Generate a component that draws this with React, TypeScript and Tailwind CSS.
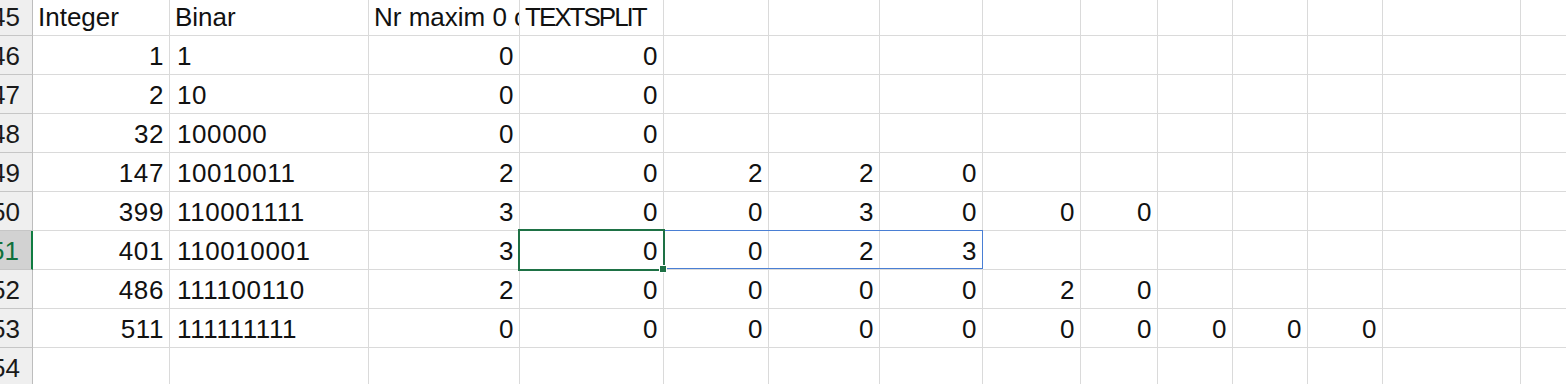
import React from "react";

const colW = [
  "w-[137px]",
  "w-[199px]",
  "w-[151px]",
  "w-[144px]",
  "w-[105px]",
  "w-[111px]",
  "w-[103px]",
  "w-[98px]",
  "w-[77px]",
  "w-[75px]",
  "w-[75px]",
  "w-[75px]",
  "w-[138px]",
  "w-[200px]",
];

type Cell = string | number | null;

const rows: { n: number; cells: Cell[] }[] = [
  { n: 46, cells: [1, "1", 0, 0] },
  { n: 47, cells: [2, "10", 0, 0] },
  { n: 48, cells: [32, "100000", 0, 0] },
  { n: 49, cells: [147, "10010011", 2, 0, 2, 2, 0] },
  { n: 50, cells: [399, "110001111", 3, 0, 0, 3, 0, 0, 0] },
  { n: 51, cells: [401, "110010001", 3, 0, 0, 2, 3] },
  { n: 52, cells: [486, "111100110", 2, 0, 0, 0, 0, 2, 0] },
  { n: 53, cells: [511, "111111111", 0, 0, 0, 0, 0, 0, 0, 0, 0, 0] },
  { n: 54, cells: [] },
];

function RowHeader({ n, selected, first }: { n: number; selected?: boolean; first?: boolean }) {
  return (
    <div
      className={
        "w-[33px] shrink-0 overflow-hidden flex justify-end items-end pb-[3px] pr-[12px] leading-[30px] border-b border-b-[#c6c6c6] " +
        (first ? "h-[36px] " : "h-[39px] ") +
        (selected
          ? "bg-[#d2d2d2] text-[#0f703b] border-r-2 border-r-[#107c41]"
          : "bg-[#efefef] text-[#1a1a1a] border-r border-r-[#bdbdbd]")
      }
    >
      <span className="whitespace-nowrap">{n}</span>
    </div>
  );
}

export default function App() {
  return (
    <div className="w-[1566px] h-[384px] overflow-hidden bg-white text-[#111] text-[26px] font-['Liberation_Sans',Arial,sans-serif]">
      {/* header row 45 */}
      <div className="flex h-[36px]">
        <RowHeader n={45} first />
        {colW.map((w, i) => {
          const text = i === 0 ? "Integer" : i === 1 ? "Binar" : i === 2 ? "Nr maxim 0 consecutive" : i === 3 ? "TEXTSPLIT" : "";
          return (
            <div
              key={i}
              className={
                w +
                " shrink-0 h-[36px] overflow-hidden whitespace-nowrap flex items-end pb-[3px] pl-[5px] leading-[30px] border-r border-b border-[#dadada]"
              }
            >
              <span className={i === 3 ? "tracking-[-2px]" : ""}>{text}</span>
            </div>
          );
        })}
      </div>

      {rows.map((r) => (
        <div key={r.n} className="flex h-[39px]">
          <RowHeader n={r.n} selected={r.n === 51} />
          {colW.map((w, i) => {
            const v = r.cells[i];
            const left = i === 1;
            const isActive = r.n === 51 && i === 3;
            const isRangeStart = r.n === 51 && i === 4;
            return (
              <div
                key={i}
                className={
                  w +
                  " relative shrink-0 h-[39px] whitespace-nowrap flex items-end pb-[3px] leading-[30px] tracking-[0.6px] border-r border-b border-[#dadada] " +
                  (left ? "justify-start pl-[7px]" : "justify-end pr-[5px]")
                }
              >
                <span>{v === null || v === undefined ? "" : v}</span>
                {isActive && (
                  <>
                    <div className="absolute -left-[2px] -right-[2px] -top-[2px] -bottom-[2px] border-2 border-[#1e7145] z-20 pointer-events-none" />
                    <div className="absolute -right-[4px] -bottom-[4px] w-[8px] h-[8px] bg-[#1e7145] border border-white z-30" />
                  </>
                )}
                {isRangeStart && (
                  <div className="absolute -left-[1px] -top-[1px] bottom-0 w-[320px] border border-[#4a7fd4] z-10 pointer-events-none" />
                )}
              </div>
            );
          })}
        </div>
      ))}
    </div>
  );
}
